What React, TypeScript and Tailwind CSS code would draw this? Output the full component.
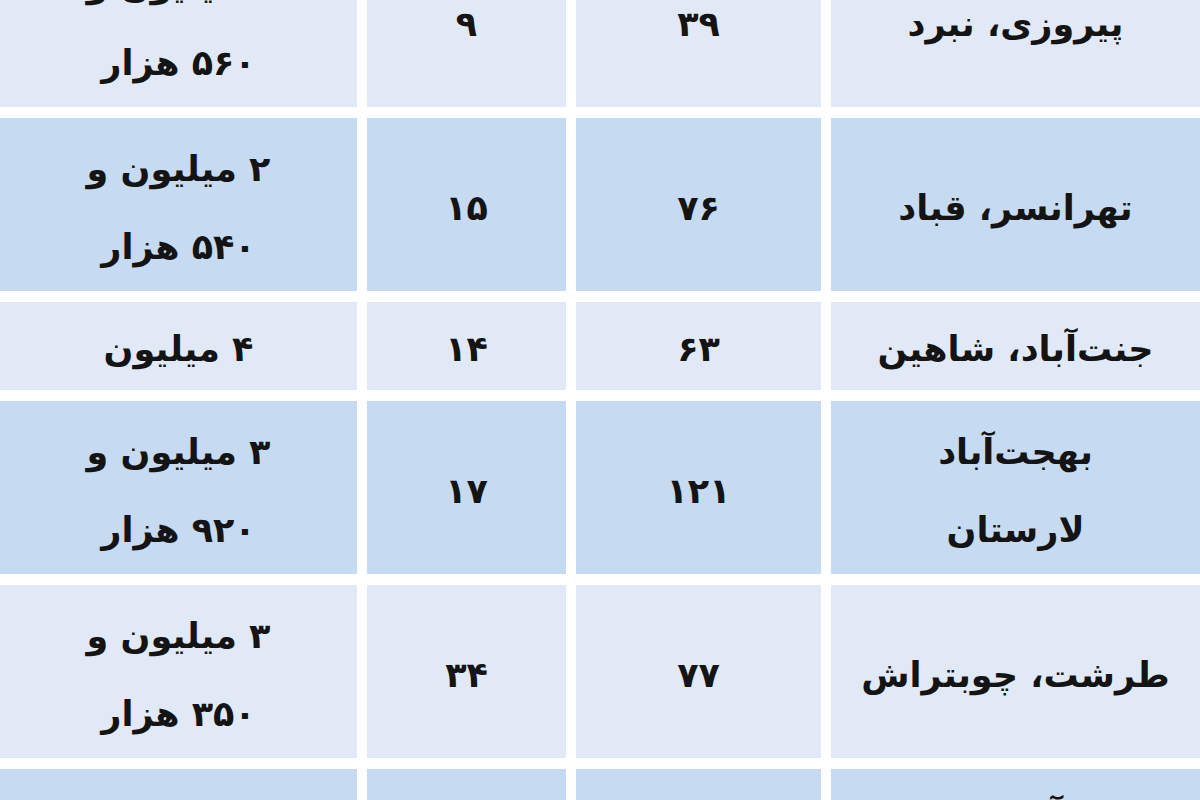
type Row = {
  area: string[];
  size: string;
  age: string;
  price: string[];
  tall: boolean;
  tint: "light" | "blue";
};

const rows: Row[] = [
  { area: ["پیروزی، نبرد"], size: "۳۹", age: "۹", price: ["۳ میلیون و", "۵۶۰ هزار"], tall: true, tint: "light" },
  { area: ["تهرانسر، قباد"], size: "۷۶", age: "۱۵", price: ["۲ میلیون و", "۵۴۰ هزار"], tall: true, tint: "blue" },
  { area: ["جنت‌آباد، شاهین"], size: "۶۳", age: "۱۴", price: ["۴ میلیون"], tall: false, tint: "light" },
  { area: ["بهجت‌آباد", "لارستان"], size: "۱۲۱", age: "۱۷", price: ["۳ میلیون و", "۹۲۰ هزار"], tall: true, tint: "blue" },
  { area: ["طرشت، چوبتراش"], size: "۷۷", age: "۳۴", price: ["۳ میلیون و", "۳۵۰ هزار"], tall: true, tint: "light" },
  { area: ["آپادانا"], size: "۴۶", age: "۲۱", price: ["۴ میلیون"], tall: false, tint: "blue" },
];

function Cell({ lines, tint }: { lines: string[]; tint: Row["tint"] }) {
  return (
    <div
      className={
        "flex flex-col items-center justify-center pt-[6px] text-center " +
        (tint === "blue" ? "bg-[#c6daf1]" : "bg-[#e2e9f6]")
      }
    >
      {lines.map((l) => (
        <span key={l} className="leading-[78px]">
          {l}
        </span>
      ))}
    </div>
  );
}

export default function App() {
  return (
    <div className="h-[800px] w-[1200px] overflow-hidden bg-white">
      <div
        dir="rtl"
        className="-mt-[66px] flex flex-col gap-[11px] font-['DejaVu_Sans',sans-serif] text-[35px] font-bold text-[#141414]"
      >
        {rows.map((r, i) => (
          <div
            key={i}
            className={
              "grid grid-cols-[369px_245px_199px_1fr] gap-x-[10px] " +
              (r.tall ? "h-[173px]" : "h-[88px]")
            }
          >
            <Cell lines={r.area} tint={r.tint} />
            <Cell lines={[r.size]} tint={r.tint} />
            <Cell lines={[r.age]} tint={r.tint} />
            <Cell lines={r.price} tint={r.tint} />
          </div>
        ))}
      </div>
    </div>
  );
}
